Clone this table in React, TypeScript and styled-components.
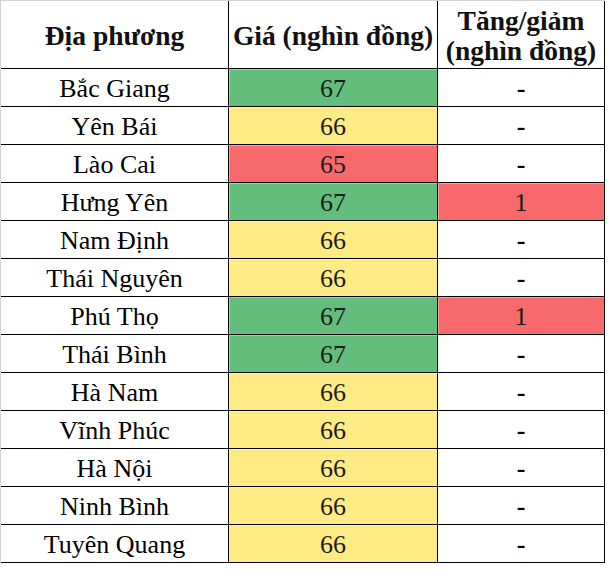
import styled, { createGlobalStyle } from "styled-components";

type Fill = "green" | "yellow" | "red" | "none";

const fills: Record<Fill, string> = {
  green: "#63be7b",
  yellow: "#ffeb84",
  red: "#f8696b",
  none: "#ffffff",
};

const rows: { place: string; price: number; priceFill: Fill; change: string; changeFill: Fill }[] = [
  { place: "Bắc Giang", price: 67, priceFill: "green", change: "-", changeFill: "none" },
  { place: "Yên Bái", price: 66, priceFill: "yellow", change: "-", changeFill: "none" },
  { place: "Lào Cai", price: 65, priceFill: "red", change: "-", changeFill: "none" },
  { place: "Hưng Yên", price: 67, priceFill: "green", change: "1", changeFill: "red" },
  { place: "Nam Định", price: 66, priceFill: "yellow", change: "-", changeFill: "none" },
  { place: "Thái Nguyên", price: 66, priceFill: "yellow", change: "-", changeFill: "none" },
  { place: "Phú Thọ", price: 67, priceFill: "green", change: "1", changeFill: "red" },
  { place: "Thái Bình", price: 67, priceFill: "green", change: "-", changeFill: "none" },
  { place: "Hà Nam", price: 66, priceFill: "yellow", change: "-", changeFill: "none" },
  { place: "Vĩnh Phúc", price: 66, priceFill: "yellow", change: "-", changeFill: "none" },
  { place: "Hà Nội", price: 66, priceFill: "yellow", change: "-", changeFill: "none" },
  { place: "Ninh Bình", price: 66, priceFill: "yellow", change: "-", changeFill: "none" },
  { place: "Tuyên Quang", price: 66, priceFill: "yellow", change: "-", changeFill: "none" },
];

const serif = `"Liberation Serif", "Times New Roman", Tinos, "DejaVu Serif", serif`;

export default function App() {
  return (
    <>
      <GlobalStyle />
      <Sheet>
        <HeaderCell>Địa phương</HeaderCell>
        <HeaderCell>Giá (nghìn đồng)</HeaderCell>
        <HeaderCell>
          Tăng/giảm
          <br />
          (nghìn đồng)
        </HeaderCell>
        {rows.map((r) => (
          <Row key={r.place}>
            <Cell $fill="none">{r.place}</Cell>
            <Cell $fill={r.priceFill}>{r.price}</Cell>
            <Cell $fill={r.changeFill} $dash={r.change === "-"}>
              {r.change}
            </Cell>
          </Row>
        ))}
      </Sheet>
    </>
  );
}

const GlobalStyle = createGlobalStyle`
  html, body {
    margin: 0;
    padding: 0;
    background: #ffffff;
  }
  body {
    font-family: ${serif};
    color: #000;
  }
`;

const Sheet = styled.div`
  display: grid;
  grid-template-columns: 228px 209px 167px;
  grid-template-rows: 68px;
  grid-auto-rows: 38px;
  width: 605px;
  box-sizing: border-box;
  border-top: 1px solid #d2d2d2;
  border-left: 1px solid #d2d2d2;
  font-family: ${serif};
`;

const HeaderCell = styled.div`
  display: flex;
  align-items: center;
  justify-content: center;
  text-align: center;
  box-sizing: border-box;
  border-right: 1px solid #000;
  border-bottom: 1px solid #000;
  font-family: ${serif};
  font-size: 27.5px;
  font-weight: 700;
  line-height: 30px;
  padding-top: 3px;
  color: #111;
`;

const Row = styled.div`
  display: contents;
`;

const Cell = styled.div<{ $fill: Fill; $dash?: boolean }>`
  display: flex;
  align-items: center;
  justify-content: center;
  box-sizing: border-box;
  border-right: 1px solid #000;
  border-bottom: 1px solid #000;
  background: ${(p) => fills[p.$fill]};
  box-shadow: ${(p) => (p.$fill === "none" ? "none" : "inset 1px 1px 0 rgba(255,255,255,0.35)")};
  font-family: ${serif};
  font-size: 26px;
  font-weight: ${(p) => (p.$dash ? 700 : 400)};
  line-height: 1;
  padding-top: 2px;
  color: ${(p) => (p.$fill === "none" ? "#000" : "#1a1a1a")};
`;
